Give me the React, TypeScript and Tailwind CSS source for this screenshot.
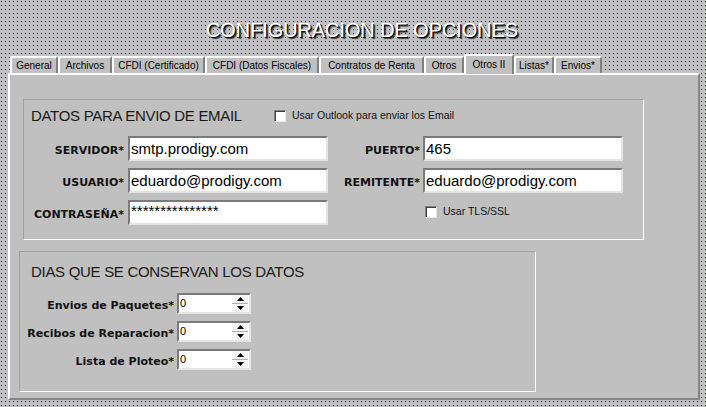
import React from "react";

const tabs = [
  { label: "General", w: "w-[48px]" },
  { label: "Archivos", w: "w-[54px]" },
  { label: "CFDI (Certificado)", w: "w-[93px]" },
  { label: "CFDI (Datos Fiscales)", w: "w-[114px]" },
  { label: "Contratos de Renta", w: "w-[105px]" },
  { label: "Otros", w: "w-[40px]" },
  { label: "Otros II", w: "w-[50px]", active: true },
  { label: "Listas*", w: "w-[40px]" },
  { label: "Envios*", w: "w-[48px]" },
];

function Checkbox({ label }: { label: string }) {
  return (
    <div className="flex items-center gap-[6px]">
      <div className="w-[12px] h-[12px] bg-white border border-t-[#808080] border-l-[#808080] border-r-[#e8e8e8] border-b-[#e8e8e8] shadow-[inset_1px_1px_0_#404040]" />
      <span className="text-[10.5px] text-[#111] font-['Liberation_Sans',sans-serif]">{label}</span>
    </div>
  );
}

function TextField({ value, small }: { value: string; small?: boolean }) {
  return (
    <div className="w-[200px] h-[25px] bg-white border-2 border-t-[#7a7a7a] border-l-[#7a7a7a] border-r-[#e4e4e4] border-b-[#e4e4e4] flex items-center px-[1px]">
      <span
        className={
          small
            ? "text-[15px] leading-none text-black -mt-[5px] font-['Liberation_Sans',sans-serif]"
            : "text-[15px] leading-none text-black font-['Liberation_Sans',sans-serif]"
        }
      >
        {value}
      </span>
    </div>
  );
}

function Label({ text, className }: { text: string; className: string }) {
  return (
    <div className={className}>
      <span className="text-[11px] font-bold text-[#111] font-['DejaVu_Sans',sans-serif]">{text}</span>
    </div>
  );
}

function Spin({ label }: { label: string }) {
  return (
    <div className="flex items-center h-[21px]">
      <div className="w-[157px] pr-[3px] text-right">
        <span className="text-[11px] font-bold text-[#111] font-['DejaVu_Sans',sans-serif]">{label}</span>
      </div>
      <div className="w-[74px] h-[21px] bg-white border-2 border-t-[#7a7a7a] border-l-[#7a7a7a] border-r-[#e4e4e4] border-b-[#e4e4e4] flex items-center justify-between">
        <span className="pl-[1px] text-[11px] text-black font-['Liberation_Sans',sans-serif]">0</span>
        <div className="flex flex-col w-[16px] h-[17px] mr-[1px]">
          <div className="flex-1 flex items-center justify-center bg-[#f4f4f4] border-b border-[#b0b0b0]">
            <svg width="7" height="4" viewBox="0 0 7 4"><path d="M3.5 0L7 4H0z" fill="#000" /></svg>
          </div>
          <div className="flex-1 flex items-center justify-center bg-[#f4f4f4]">
            <svg width="7" height="4" viewBox="0 0 7 4"><path d="M0 0h7L3.5 4z" fill="#000" /></svg>
          </div>
        </div>
      </div>
    </div>
  );
}

export default function App() {
  return (
    <div className="w-[706px] h-[407px] overflow-hidden bg-[#141440] [background-image:linear-gradient(90deg,transparent_1px,#c0c0c0_1px),linear-gradient(transparent_1px,#c0c0c0_1px)] [background-size:4px_4px] [background-position:1px_1px] font-['Liberation_Sans',sans-serif]">
      {/* title */}
      <div className="h-[54px] flex items-center justify-center pt-[6px] pl-[18px]">
        <h1 className="text-[20px] text-white tracking-[-0.1px] [text-shadow:1px_1px_0_#000,2px_2px_1px_#3a3a3a]">
          CONFIGURACION DE OPCIONES
        </h1>
      </div>

      {/* tabs */}
      <div className="h-[19px] flex items-end pl-[10px] relative z-10">
        {tabs.map((t) =>
          t.active ? (
            <div
              key={t.label}
              className={`${t.w} h-[20px] -mb-[1px] bg-[#c0c0c0] border-t-2 border-l-2 border-t-white border-l-white border-r-2 border-r-[#808080] rounded-t-[2px] flex justify-center pt-[1px]`}
            >
              <span className="text-[10px] text-black">{t.label}</span>
            </div>
          ) : (
            <div
              key={t.label}
              className={`${t.w} h-[17px] bg-[#c0c0c0] border-t-2 border-l-2 border-t-white border-l-white border-r-2 border-r-[#808080] rounded-t-[2px] flex justify-center items-center`}
            >
              <span className="text-[10px] text-black">{t.label}</span>
            </div>
          )
        )}
      </div>

      {/* panel */}
      <div className="ml-[8px] w-[692px] h-[327px] bg-[#c0c0c0] border-t-2 border-l-2 border-t-white border-l-white border-r-2 border-b-2 border-r-[#858585] border-b-[#858585] pt-[24px]">
        {/* email group */}
        <div className="ml-[13px] w-[621px] h-[141px] border border-t-[#a0a0a0] border-l-[#a0a0a0] border-r-white border-b-white pl-[7px] pt-[7px]">
          <div className="flex items-center h-[18px]">
            <span className="text-[15px] text-[#1c1a14] tracking-[-0.3px]">DATOS PARA ENVIO DE EMAIL</span>
            <div className="ml-[32px]">
              <Checkbox label="Usar Outlook para enviar los Email" />
            </div>
          </div>
          <div className="mt-[11px] -ml-[7px] flex flex-col gap-[7px]">
            <div className="flex items-center">
              <Label text="SERVIDOR*" className="w-[104px] pr-[4px] text-right" />
              <TextField value="smtp.prodigy.com" />
              <Label text="PUERTO*" className="w-[95px] pr-[3px] text-right" />
              <TextField value="465" />
            </div>
            <div className="flex items-center">
              <Label text="USUARIO*" className="w-[104px] pr-[4px] text-right" />
              <TextField value="eduardo@prodigy.com" />
              <Label text="REMITENTE*" className="w-[95px] pr-[3px] text-right" />
              <TextField value="eduardo@prodigy.com" />
            </div>
            <div className="flex items-center">
              <Label text="CONTRASEÑA*" className="w-[104px] pr-[4px] text-right" />
              <TextField value="***************" small />
              <div className="ml-[97px] self-start pt-[4px]">
                <Checkbox label="Usar TLS/SSL" />
              </div>
            </div>
          </div>
        </div>

        {/* days group */}
        <div className="ml-[9px] mt-[11px] w-[517px] h-[141px] border border-t-[#a0a0a0] border-l-[#a0a0a0] border-r-white border-b-white pt-[11px]">
          <div className="pl-[11px] h-[18px] flex items-center">
            <span className="text-[15px] text-[#1c1a14] tracking-[-0.3px]">DIAS QUE SE CONSERVAN LOS DATOS</span>
          </div>
          <div className="mt-[12px] flex flex-col gap-[7px]">
            <Spin label="Envios de Paquetes*" />
            <Spin label="Recibos de Reparacion*" />
            <Spin label="Lista de Ploteo*" />
          </div>
        </div>
      </div>
    </div>
  );
}
